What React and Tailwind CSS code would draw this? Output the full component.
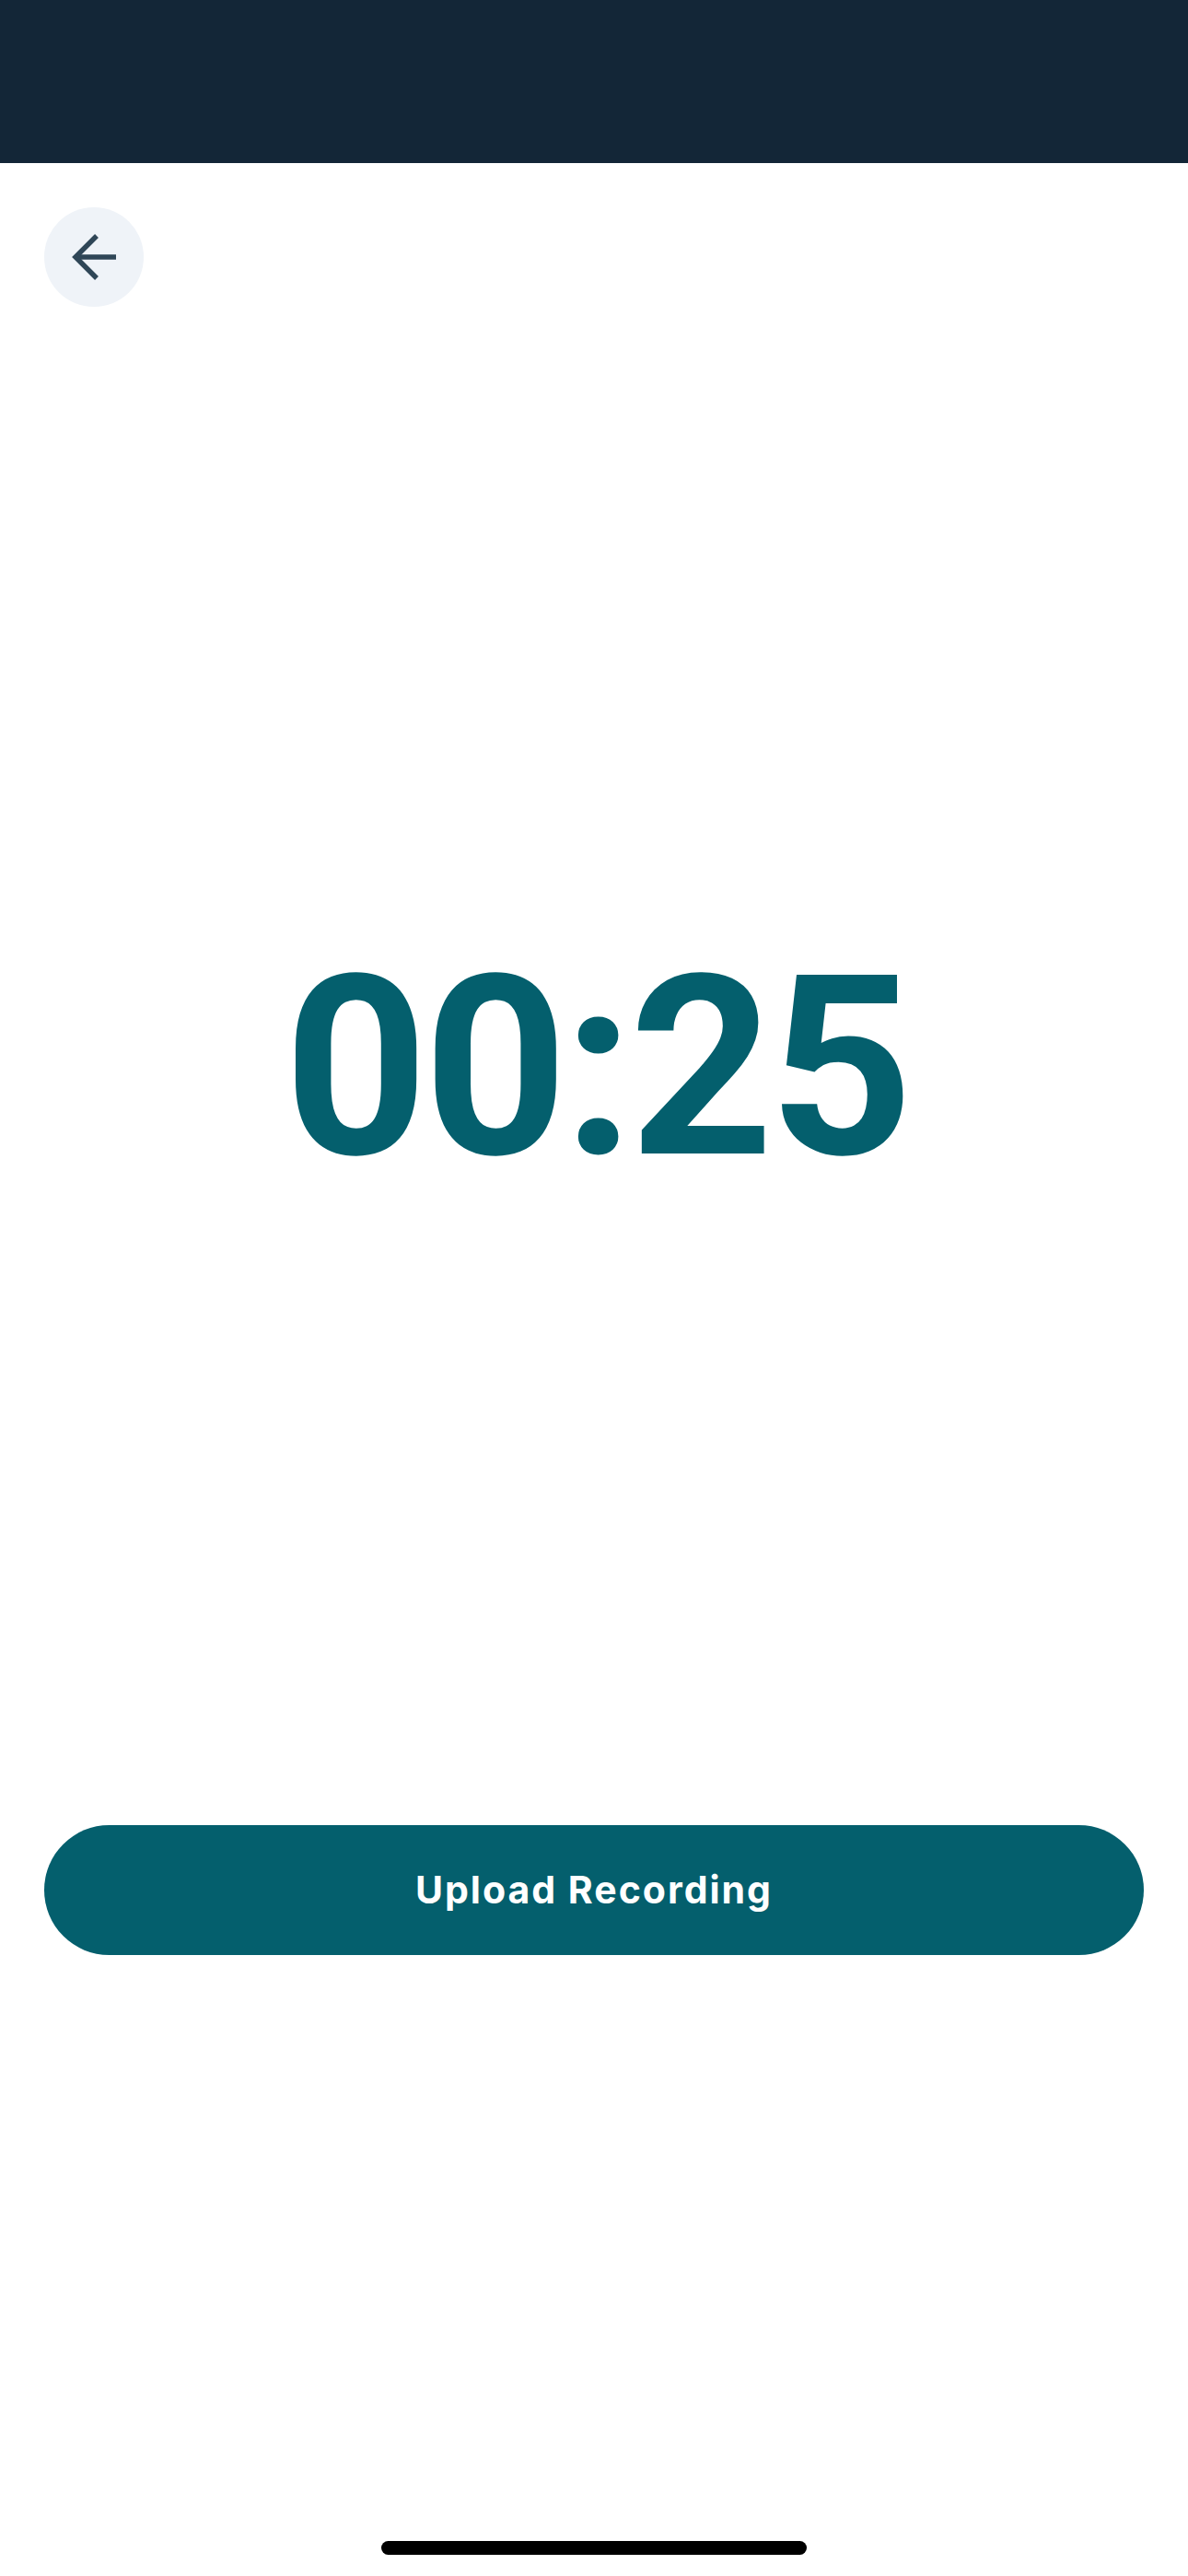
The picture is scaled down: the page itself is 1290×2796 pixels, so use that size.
export default function App() {
  return (
    <div className="flex min-h-[2796px] w-[1290px] flex-col bg-white" style={{ fontFamily: "Inter, 'Open Sans', sans-serif" }}>
      <div className="h-[177px] w-full bg-[#132637]" />
      <div className="flex px-[48px] pt-[48px]">
        <button className="flex h-[108px] w-[108px] items-center justify-center rounded-full bg-[#eff3f8]">
          <svg width="56" height="56" viewBox="0 0 56 56" fill="none" stroke="#2f4657" strokeWidth="5.5" strokeLinecap="butt" strokeLinejoin="miter">
            <path d="M31 5 L8 28 L31 51" />
            <path d="M8 28 H52" />
          </svg>
        </button>
      </div>
      <div className="mt-[690px] flex justify-center">
        <div className="pl-[5px] text-[273px] font-bold leading-none tracking-[-5px] text-[#045f6d]" style={{ fontFamily: "Roboto, 'Open Sans', sans-serif" }}>00:25</div>
      </div>
      <div className="mt-[685px] px-[48px]">
        <button className="flex h-[141px] w-full items-center justify-center rounded-full bg-[#045f6d] text-[41px] font-bold tracking-[2px] text-white">
          Upload Recording
        </button>
      </div>
      <div className="mt-auto flex justify-center pb-[23px]">
        <div className="h-[15px] w-[462px] rounded-full bg-black" />
      </div>
    </div>
  );
}
